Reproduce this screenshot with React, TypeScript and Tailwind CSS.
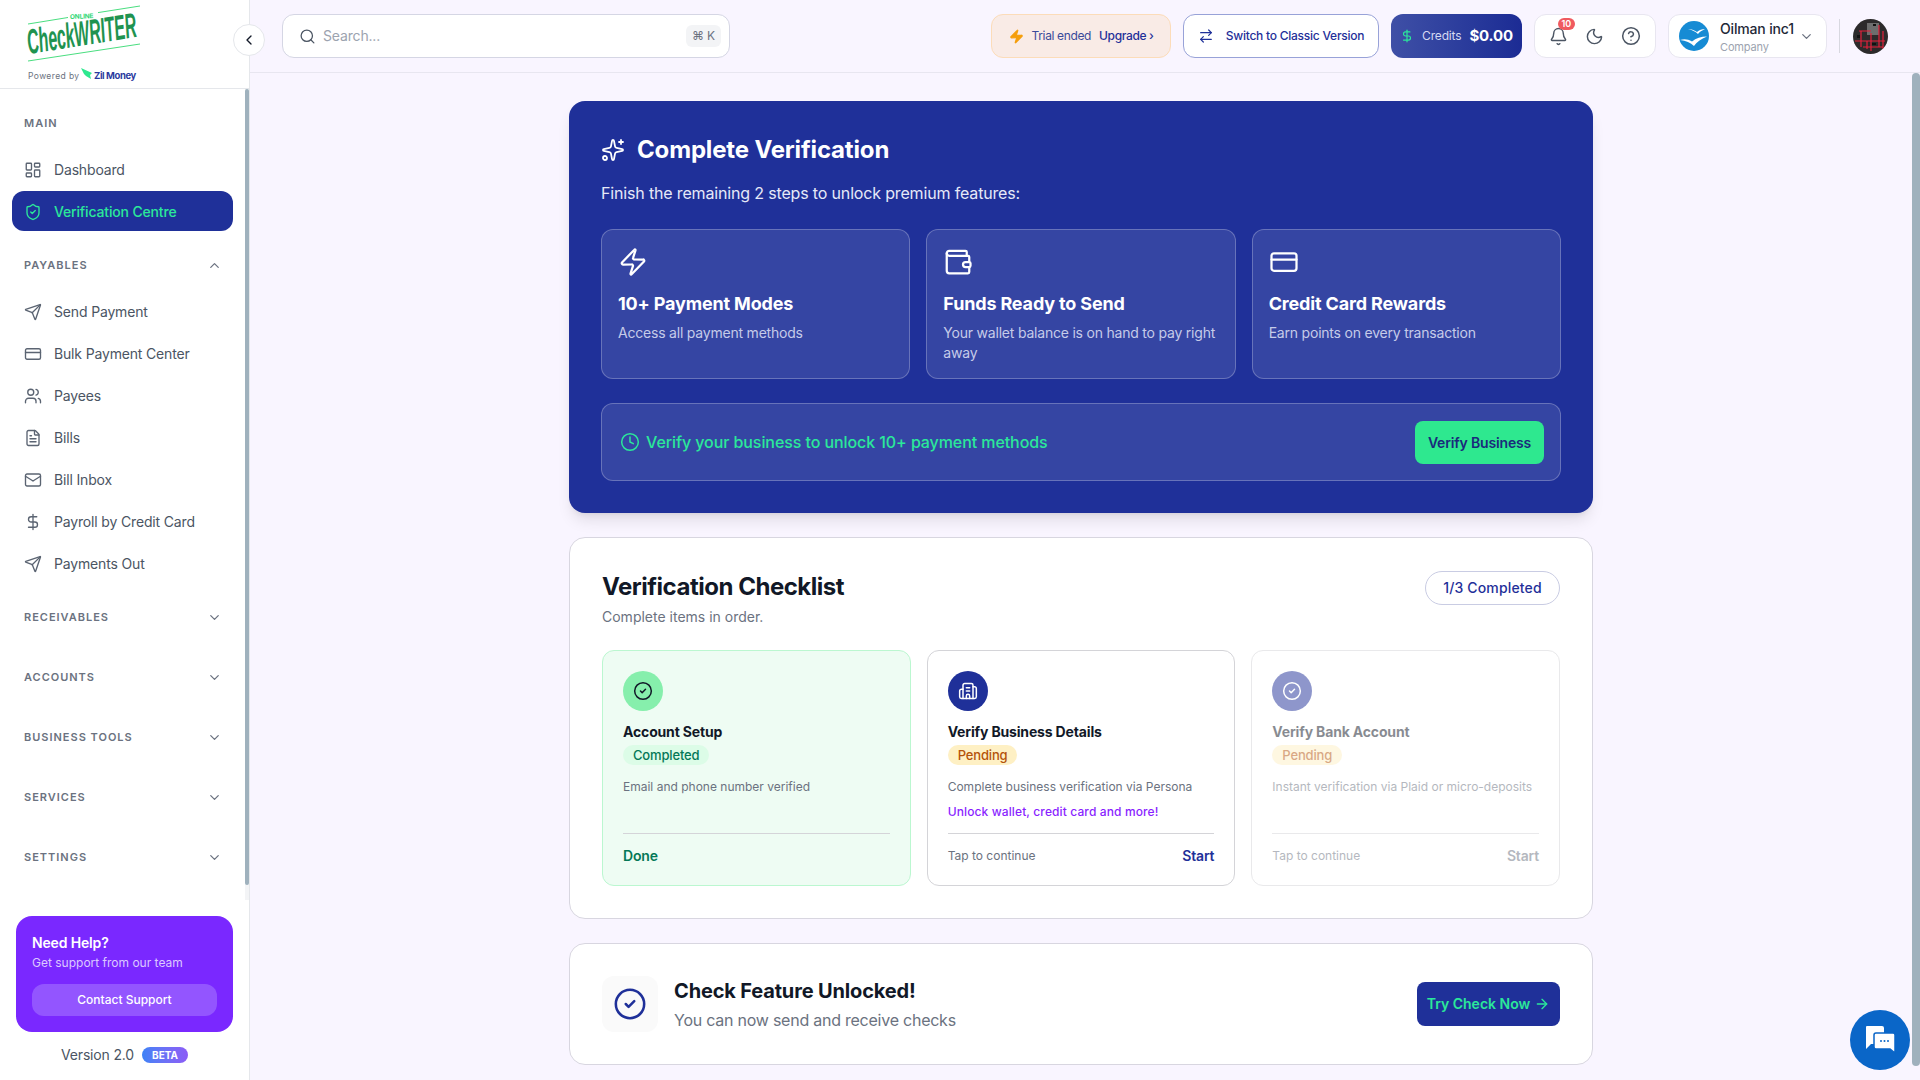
import {
  ArrowRight,
  ArrowRightLeft,
  Bell,
  Building2,
  ChevronDown,
  ChevronLeft,
  ChevronUp,
  CircleCheck,
  CircleHelp,
  Clock,
  CreditCard,
  DollarSign,
  FileText,
  LayoutDashboard,
  Mail,
  Moon,
  Search,
  Send,
  ShieldCheck,
  Sparkles,
  Users,
  Wallet,
  Zap,
} from 'lucide-react';

const payables = [
  { label: 'Send Payment', icon: Send },
  { label: 'Bulk Payment Center', icon: CreditCard },
  { label: 'Payees', icon: Users },
  { label: 'Bills', icon: FileText },
  { label: 'Bill Inbox', icon: Mail },
  { label: 'Payroll by Credit Card', icon: DollarSign },
  { label: 'Payments Out', icon: Send },
];

const collapsed = ['RECEIVABLES', 'ACCOUNTS', 'BUSINESS TOOLS', 'SERVICES', 'SETTINGS'];

const benefits = [
  { title: '10+ Payment Modes', text: 'Access all payment methods', icon: Zap },
  { title: 'Funds Ready to Send', text: 'Your wallet balance is on hand to pay right away', icon: Wallet },
  { title: 'Credit Card Rewards', text: 'Earn points on every transaction', icon: CreditCard },
];

/* ─── Logo ─────────────────────────────────────────────────── */
function Logo() {
  return (
    <svg width="130" height="84" viewBox="0 -6 130 84" className="block overflow-visible">
      <path d="M0 18L40 11.500M70 6.600L112 0" stroke="#4ade80" strokeWidth="1" />
      <line x1="0" y1="55" x2="112" y2="38" stroke="#4ade80" strokeWidth="1" />
      <text x="42" y="13" fontSize="6.500" fontWeight="700" fill="#34d877" fontFamily="Inter, sans-serif" transform="rotate(-2 42 13)">
        ONLINE
      </text>
      <text
        x="0"
        y="0"
        fontSize="35"
        fontWeight="700"
        fontStyle="italic"
        fill="#1f9350"
        fontFamily="Liberation Sans, sans-serif"
        transform="translate(1 48) rotate(-9) scale(0.457 1)"
      >
        CheckWRITER
      </text>
      <text x="0" y="73" fontSize="8.500" fill="#6b7280" letterSpacing="0.4" fontFamily="Inter, sans-serif">
        Powered by
      </text>
      <path d="M53 62l11 5-2 2 1 4-5-3-2-2z" fill="#2ee88f" />
      <text x="66" y="73" fontSize="9.500" fontWeight="700" fill="#2b3a9e" letterSpacing="-0.4" fontFamily="Inter, sans-serif">
        Zil Money
      </text>
    </svg>
  );
}

/* ─── Sidebar ──────────────────────────────────────────────── */
function NavItem({ label, icon: Icon }: { label: string; icon: typeof Send }) {
  return (
    <div className="flex h-10 items-center gap-3 px-3 text-sm text-[#4b5563]">
      <Icon size={18} strokeWidth={1.8} className="shrink-0 text-[#5b6472]" />
      <span>{label}</span>
    </div>
  );
}

function SectionLabel({ label, open }: { label: string; open?: boolean }) {
  return (
    <div className="flex h-5 items-center justify-between pl-3 pr-[11px] text-[11px] font-semibold tracking-[0.09em] text-[#6b7280]">
      <span>{label}</span>
      {open ? <ChevronUp size={15} strokeWidth={2} /> : <ChevronDown size={15} strokeWidth={2} />}
    </div>
  );
}

function Sidebar() {
  return (
    <aside className="flex h-screen w-[250px] shrink-0 flex-col border-r border-[#e5e7eb] bg-white">
      <div className="h-[89px] shrink-0 border-b border-[#e5e7eb] pl-7">
        <Logo />
      </div>
      <div className="flex min-h-0 flex-1">
        <nav className="flex-1 px-3 pt-6">
          <div className="flex h-5 items-center pl-3 text-[11px] font-semibold tracking-[0.09em] text-[#6b7280]">MAIN</div>
          <div className="mt-[17px]">
            <NavItem label="Dashboard" icon={LayoutDashboard} />
          </div>
          <div className="mt-px flex h-10 items-center gap-3 rounded-xl bg-[#1f3099] px-3 pt-px text-sm font-medium text-[#2be89a]">
            <ShieldCheck size={18} strokeWidth={1.8} />
            <span>Verification Centre</span>
          </div>
          <div className="mt-6">
            <SectionLabel label="PAYABLES" open />
          </div>
          <div className="mt-[17px] flex flex-col gap-0.5">
            {payables.map(item => (
              <NavItem key={item.label} label={item.label} icon={item.icon} />
            ))}
          </div>
          <div className="mt-[23px] flex flex-col gap-10">
            {collapsed.map(label => (
              <SectionLabel key={label} label={label} />
            ))}
          </div>
        </nav>
        <div className="w-1 shrink-0 bg-[#f3f4f6]">
          <div className="h-[796px] rounded-full bg-[#9fb1bd]" />
        </div>
      </div>
      <div className="h-[180px] shrink-0 px-4 pt-4">
        <div className="w-[217px] rounded-2xl bg-[#7a28ff] px-4 pt-[17px] pb-4">
          <div className="text-sm font-semibold leading-5 text-white">Need Help?</div>
          <div className="mt-0.5 text-xs leading-4 tracking-normal text-[#dcc9ff]">Get support from our team</div>
          <div className="mt-[13px] flex h-8 items-center justify-center rounded-xl bg-[#9355ff] text-xs font-medium tracking-normal text-white">
            Contact Support
          </div>
        </div>
        <div className="mt-[13px] flex w-[217px] items-center justify-center gap-2 text-sm text-[#4b5563]">
          <span>Version 2.0</span>
          <span className="rounded-full bg-gradient-to-r from-[#3b82f6] to-[#8b5cf6] px-2.5 py-px text-[10px] font-bold tracking-normal text-white">
            BETA
          </span>
        </div>
      </div>
    </aside>
  );
}

/* ─── Header ───────────────────────────────────────────────── */
function CompanyLogo() {
  return (
    <svg width="30" height="30" viewBox="0 0 30 30" className="shrink-0">
      <circle cx="15" cy="15" r="15" fill="#168bd4" />
      <path d="M9 8c4 0 7 1.500 9 3 2-2 5-3 8-3-3 1.500-5.500 3-7 5-2.500-2.500-6-4-10-5z" fill="#fff" />
      <path d="M1 19c4-1.500 8-1 12 1.500 4-3.500 9-5 15-5-6 2.500-10.500 5.500-13 9.500-3.500-3.500-8-5.500-14-6z" fill="#fff" />
    </svg>
  );
}

function UserAvatar() {
  return (
    <svg width="35" height="35" viewBox="0 0 35 35">
      <clipPath id="avatarClip">
        <circle cx="17.500" cy="17.500" r="17.500" />
      </clipPath>
      <g clipPath="url(#avatarClip)">
        <rect width="35" height="35" fill="#2c2a2b" />
        <rect x="14" y="4" width="12" height="12" fill="#6d6d6d" />
        <g stroke="#e3213b" strokeWidth="1.200" fill="none">
          <path d="M2 22h30M6 12h12M10 28h20M8 12v16M18 14v18M26 6v22M30 12v18M14 22v8" />
        </g>
        <rect x="20" y="5" width="3" height="2" fill="#111" />
        <rect x="4" y="16" width="3" height="3" fill="#111" />
        <rect x="19" y="24" width="4" height="2" fill="#111" />
      </g>
    </svg>
  );
}

function Header() {
  return (
    <header className="flex h-[73px] shrink-0 items-center justify-between border-b border-[#e8e6f0] pl-8 pr-8">
      <div className="flex h-11 w-[448px] items-center rounded-xl border border-[#d5d6e4] bg-white pl-4 pr-2">
        <Search size={17} strokeWidth={1.8} className="text-[#4b5563]" />
        <span className="ml-[7px] flex-1 text-sm text-[#9ca3af]">Search...</span>
        <span className="rounded-md bg-[#f3f4f6] px-1.5 py-[3px] text-xs text-[#6b7280]">⌘ K</span>
      </div>
      <div className="flex items-center gap-3">
        <div className="flex h-11 w-[180px] items-center justify-center gap-2 rounded-xl border border-[#fcdcb9] bg-[#f9ebe6] text-xs tracking-[-0.03em] text-[#3a4a9a]">
          <Zap size={15} className="fill-[#f59e0b] text-[#f59e0b]" />
          <span>Trial ended</span>
          <span className="font-medium text-[#1f3099]">Upgrade ›</span>
        </div>
        <div className="flex h-11 w-[196px] items-center justify-center gap-3 rounded-xl border border-[#98a2d8] bg-white text-xs font-medium tracking-[-0.02em] text-[#1f3099]">
          <ArrowRightLeft size={16} strokeWidth={1.8} />
          <span>Switch to Classic Version</span>
        </div>
        <div className="flex h-11 w-[131px] items-center justify-center gap-2 rounded-xl bg-gradient-to-r from-[#3f4fa6] to-[#1c2b94]">
          <DollarSign size={14} className="text-[#2be89a]" />
          <span className="text-xs text-[#d5daf2]">Credits</span>
          <span className="text-[15px] font-bold text-white">$0.00</span>
        </div>
        <div className="flex h-11 w-[122px] items-center justify-center gap-[17px] rounded-xl border border-[#e8e6f0] bg-white text-[#4b5563]">
          <div className="relative">
            <Bell size={19} strokeWidth={1.8} />
            <span className="absolute -right-[7px] -top-[9px] rounded-full bg-[#f05a5f] px-1 text-[9px] font-semibold leading-[12px] text-white">
              10
            </span>
          </div>
          <Moon size={19} strokeWidth={1.8} />
          <CircleHelp size={20} strokeWidth={1.8} />
        </div>
        <div className="flex h-11 w-[159px] items-center rounded-xl border border-[#e8e6f0] bg-white pl-2.5 pr-3">
          <CompanyLogo />
          <div className="ml-[11px] flex-1 pt-px">
            <div className="text-sm font-medium leading-4 text-[#1f2937]">Oilman inc1</div>
            <div className="mt-1 text-[11px] leading-3 text-[#9ca3af]">Company</div>
          </div>
          <ChevronDown size={15} className="text-[#6b7280]" />
        </div>
        <div className="h-[34px] w-px bg-[#d8d8e0]" />
        <div className="ml-[1px]">
          <UserAvatar />
        </div>
      </div>
    </header>
  );
}

/* ─── Hero card ────────────────────────────────────────────── */
function VerificationHero() {
  return (
    <section className="rounded-2xl bg-[#1f3099] px-8 pb-8 pt-[33px] shadow-lg">
      <div className="flex items-center gap-3">
        <Sparkles size={24} strokeWidth={1.8} className="text-white" />
        <h1 className="text-2xl font-bold leading-8 text-white">Complete Verification</h1>
      </div>
      <p className="mt-[15px] text-base leading-6 text-[#e6e9f8]">Finish the remaining 2 steps to unlock premium features:</p>
      <div className="mt-6 grid grid-cols-3 gap-4">
        {benefits.map(item => (
          <div key={item.title} className="h-[150px] rounded-xl border border-white/25 bg-white/10 px-4 pt-[17px]">
            <item.icon size={30} strokeWidth={1.8} className="text-white" />
            <div className="mt-[15px] text-lg font-bold leading-6 text-white">{item.title}</div>
            <div className="mt-1.5 pt-px text-sm leading-5 tracking-[-0.015em] text-[#c5cbe9]">{item.text}</div>
          </div>
        ))}
      </div>
      <div className="mt-6 flex h-[78px] items-center justify-between rounded-xl border border-white/25 bg-white/10 pl-[18px] pr-4">
        <div className="flex items-center gap-[6px] text-base font-medium tracking-[-0.005em] text-[#2be89a]">
          <Clock size={20} strokeWidth={1.8} />
          <span>Verify your business to unlock 10+ payment methods</span>
        </div>
        <div className="flex h-[43px] w-[129px] items-center justify-center rounded-lg bg-[#2ee88f] pt-px text-sm font-semibold text-[#1a2a7c]">
          Verify Business
        </div>
      </div>
    </section>
  );
}

/* ─── Checklist ────────────────────────────────────────────── */
function ChecklistCard({
  title,
  status,
  text,
  extra,
  icon,
  footer,
  className = '',
}: {
  title: string;
  status: React.ReactNode;
  text: string;
  extra?: string;
  icon: React.ReactNode;
  footer: React.ReactNode;
  className?: string;
}) {
  return (
    <div className={`h-[236px] rounded-xl border px-5 pt-5 ${className}`}>
      {icon}
      <div className="mt-[11px] text-sm font-bold leading-5 text-[#111827]">{title}</div>
      <div className="mt-[3px] flex">{status}</div>
      <div className="mt-[14px] h-[44px] text-xs leading-4 tracking-normal text-[#6b7280]">
        <div>{text}</div>
        {extra && <div className="mt-[9px] font-medium tracking-[0.01em] text-[#8a1fff]">{extra}</div>}
      </div>
      <div className="mt-[10px] flex h-[45px] items-center justify-between border-t border-[#d4d4d8]">{footer}</div>
    </div>
  );
}

function Pending() {
  return <span className="rounded-full bg-[#fef0c4] px-2.5 text-[13px] font-medium leading-5 text-[#b45309]">Pending</span>;
}

function StartFooter() {
  return (
    <>
      <span className="text-xs tracking-normal text-[#6b7280]">Tap to continue</span>
      <span className="text-sm font-semibold text-[#1f3099]">Start</span>
    </>
  );
}

function Checklist() {
  return (
    <section className="mt-6 rounded-2xl border border-[#d8d6e0] bg-white px-8 pb-8 pt-[29px]">
      <div className="flex items-start justify-between">
        <div>
          <h2 className="text-2xl font-bold leading-[40px] tracking-[-0.02em] text-[#111827]">Verification Checklist</h2>
          <p className="text-sm leading-5 tracking-normal text-[#6b7280]">Complete items in order.</p>
        </div>
        <div className="mt-1 flex h-[34px] w-[135px] items-center justify-center rounded-full border border-[#c9cce3] text-sm font-medium tracking-[0.01em] text-[#1f3099]">
          1/3 Completed
        </div>
      </div>
      <div className="mt-[23px] grid grid-cols-3 gap-4">
        <ChecklistCard
          className="border-[#bbf7d0] bg-[#eefcf3]"
          title="Account Setup"
          status={<span className="rounded-full bg-[#dcfce7] px-2.5 text-[13px] font-medium leading-5 text-[#047857]">Completed</span>}
          text="Email and phone number verified"
          icon={
            <div className="flex h-10 w-10 items-center justify-center rounded-full bg-[#86efac]">
              <CircleCheck size={20} strokeWidth={1.8} className="text-[#111827]" />
            </div>
          }
          footer={<span className="text-sm font-semibold text-[#047857]">Done</span>}
        />
        <ChecklistCard
          className="border-[#d4d4d8] bg-white"
          title="Verify Business Details"
          status={<Pending />}
          text="Complete business verification via Persona"
          extra="Unlock wallet, credit card and more!"
          icon={
            <div className="flex h-10 w-10 items-center justify-center rounded-full bg-[#1f3099]">
              <Building2 size={20} strokeWidth={1.8} className="text-white" />
            </div>
          }
          footer={<StartFooter />}
        />
        <ChecklistCard
          className="border-[#d4d4d8] bg-white opacity-50"
          title="Verify Bank Account"
          status={<Pending />}
          text="Instant verification via Plaid or micro-deposits"
          icon={
            <div className="flex h-10 w-10 items-center justify-center rounded-full bg-[#1f3099]">
              <CircleCheck size={20} strokeWidth={1.8} className="text-white" />
            </div>
          }
          footer={
            <>
              <span className="text-xs tracking-normal text-[#6b7280]">Tap to continue</span>
              <span className="text-sm font-semibold text-[#6b7280]">Start</span>
            </>
          }
        />
      </div>
    </section>
  );
}

/* ─── Unlocked banner ──────────────────────────────────────── */
function UnlockedBanner() {
  return (
    <section className="mt-6 flex h-[122px] items-center justify-between rounded-2xl border border-[#d8d6e0] bg-white px-8">
      <div className="flex items-center gap-4">
        <div className="flex h-14 w-14 items-center justify-center rounded-xl bg-[#fafafa]">
          <CircleCheck size={34} strokeWidth={1.8} className="text-[#1f3099]" />
        </div>
        <div>
          <div className="text-xl font-bold leading-7 text-[#111827]">Check Feature Unlocked!</div>
          <div className="mt-[3px] text-base leading-6 tracking-[-0.015em] text-[#6b7280]">You can now send and receive checks</div>
        </div>
      </div>
      <div className="flex h-11 w-[143px] items-center justify-center gap-1 rounded-lg bg-[#1f3099] text-sm font-semibold tracking-normal text-[#2be89a]">
        <span>Try Check Now</span>
        <ArrowRight size={16} />
      </div>
    </section>
  );
}

/* ─── Chat bubble ──────────────────────────────────────────── */
function ChatButton() {
  return (
    <div className="absolute bottom-[10px] right-[10px] flex h-[60px] w-[60px] items-center justify-center rounded-full bg-[#0a66c8]">
      <svg width="32" height="30" viewBox="0 0 32 30">
        <path d="M3 1h15a2 2 0 0 1 2 2v14a2 2 0 0 1-2 2H7l-5 5V2a1 1 0 0 1 1-1z" fill="#fff" />
        <path d="M12 8h17a2 2 0 0 1 2 2v18l-5-4H12a2 2 0 0 1-2-2V10a2 2 0 0 1 2-2z" fill="#fff" stroke="#0a66c8" strokeWidth="1.500" />
        <circle cx="17" cy="16" r="1" fill="#0a66c8" />
        <circle cx="20.500" cy="16" r="1" fill="#0a66c8" />
        <circle cx="24" cy="16" r="1" fill="#0a66c8" />
      </svg>
    </div>
  );
}

export default function App() {
  return (
    <div className="relative flex h-screen overflow-hidden bg-[#f9f5ff] tracking-[-0.01em] [font-family:Inter,'Liberation_Sans',sans-serif]">
      <Sidebar />
      <div className="absolute left-[233px] top-6 z-10 flex h-8 w-8 items-center justify-center rounded-full border border-[#e5e7eb] bg-white text-[#111827]">
        <ChevronLeft size={16} />
      </div>
      <div className="flex min-w-0 flex-1 flex-col">
        <Header />
        <div className="flex min-h-0 flex-1">
          <main className="min-w-0 flex-1 overflow-hidden pt-7">
            <div className="mx-auto w-[1024px]">
              <VerificationHero />
              <Checklist />
              <UnlockedBanner />
            </div>
          </main>
          <div className="w-2 shrink-0">
            <div className="h-[993px] rounded-full bg-[#9fb1bd]" />
          </div>
        </div>
      </div>
      <ChatButton />
    </div>
  );
}
